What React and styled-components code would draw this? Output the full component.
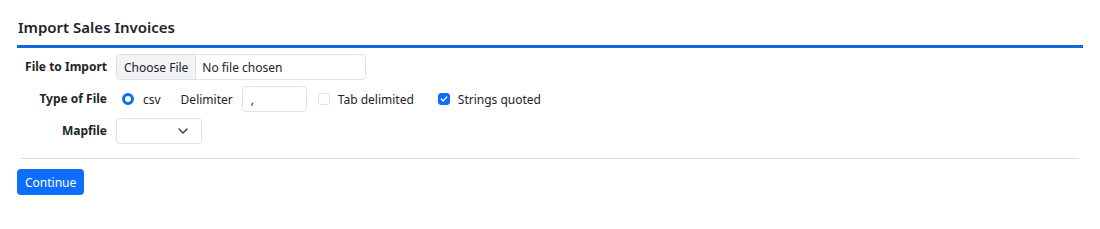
import React, { useState } from 'react'
import styled, { createGlobalStyle } from 'styled-components'

const GlobalStyle = createGlobalStyle`
  body {
    margin: 0;
    background: #fff;
    font-family: "Noto Sans", "Open Sans", sans-serif;
    font-size: 12px;
    color: #212529;
  }
`

export default function App() {
  const [strings, setStrings] = useState(true)
  const [tab, setTab] = useState(false)

  return (
    <>
      <GlobalStyle />
      <Page>
        <Header>Import Sales Invoices</Header>
        <Form>
          <Label>File to Import</Label>
          <Field>
            <FileBox>
              <FileButton>Choose File</FileButton>
              <FileName>No file chosen</FileName>
            </FileBox>
          </Field>

          <Label>Type of File</Label>
          <Field>
            <Option $gap={9} $before={6}>
              <Radio />
              <span>csv</span>
            </Option>
            <Option $gap={9} $before={20}>
              <span>Delimiter</span>
              <TextInput defaultValue="," />
            </Option>
            <Option $gap={8} $before={11} onClick={() => setTab(!tab)}>
              <Check $on={tab} />
              <span>Tab delimited</span>
            </Option>
            <Option $gap={8} $before={24} onClick={() => setStrings(!strings)}>
              <Check $on={strings}>
                {strings && (
                  <svg width="8" height="8" viewBox="0 0 8 8">
                    <path d="M1.3 4.1 L3.2 5.9 L6.7 2.1" fill="none" stroke="#fff" strokeWidth="1.4" strokeLinecap="round" strokeLinejoin="round" />
                  </svg>
                )}
              </Check>
              <span>Strings quoted</span>
            </Option>
          </Field>

          <Label>Mapfile</Label>
          <Field>
            <Select>
              <svg width="10" height="6" viewBox="0 0 10 6">
                <path d="M1 1 L5 5 L9 1" fill="none" stroke="#343a40" strokeWidth="1.4" strokeLinecap="round" strokeLinejoin="round" />
              </svg>
            </Select>
          </Field>
        </Form>
        <Rule />
        <Button>Continue</Button>
      </Page>
    </>
  )
}

const Page = styled.div`
  padding: 16px 17px 0 17px;
  width: 1066px;
`

const Header = styled.h2`
  margin: 0;
  font-size: 15px;
  font-weight: 600;
  line-height: 22px;
  padding: 0 1px 7px 1px;
  border-bottom: 3px solid #1468de;
  color: #212529;
`

const Form = styled.div`
  display: grid;
  grid-template-columns: 90px auto;
  column-gap: 9px;
  row-gap: 6px;
  margin-top: 6px;
  align-items: center;
`

const Label = styled.div`
  text-align: right;
  font-weight: 700;
  line-height: 26px;
`

const Field = styled.div`
  display: flex;
  align-items: center;
  height: 26px;
`

const FileBox = styled.div`
  display: flex;
  width: 250px;
  height: 26px;
  box-sizing: border-box;
  border: 1px solid #dee2e6;
  border-radius: 4px;
  overflow: hidden;
`

const FileButton = styled.div`
  display: flex;
  align-items: center;
  padding: 0 7px;
  background: #f1f3f5;
  border-right: 1px solid #dee2e6;
`

const FileName = styled.div`
  display: flex;
  align-items: center;
  padding: 0 6px;
`

const Option = styled.label`
  display: flex;
  align-items: center;
  gap: ${p => p.$gap}px;
  margin-left: ${p => p.$before}px;
  cursor: pointer;
`

const Radio = styled.span`
  width: 12px;
  height: 12px;
  box-sizing: border-box;
  border-radius: 50%;
  border: 3.5px solid #0d6efd;
  background: #fff;
`

const Check = styled.span`
  width: 12px;
  height: 12px;
  box-sizing: border-box;
  border-radius: 3px;
  border: 1px solid ${p => (p.$on ? '#0d6efd' : '#dee2e6')};
  background: ${p => (p.$on ? '#0d6efd' : '#fff')};
  display: flex;
  align-items: center;
  justify-content: center;
`

const TextInput = styled.input`
  width: 65px;
  height: 26px;
  box-sizing: border-box;
  border: 1px solid #dee2e6;
  border-radius: 4px;
  padding: 0 8px;
  font: inherit;
  color: #212529;
  outline: none;
`

const Select = styled.div`
  width: 86px;
  height: 26px;
  box-sizing: border-box;
  border: 1px solid #dee2e6;
  border-radius: 4px;
  display: flex;
  align-items: center;
  justify-content: flex-end;
  padding-right: 13px;
`

const Rule = styled.hr`
  margin: 14px 4px 10px 4px;
  border: 0;
  border-top: 1px solid #d8dadc;
`

const Button = styled.button`
  font: inherit;
  color: #fff;
  background: #0d6efd;
  border: 0;
  border-radius: 4px;
  height: 26px;
  padding: 0 8px;
  cursor: pointer;
`
